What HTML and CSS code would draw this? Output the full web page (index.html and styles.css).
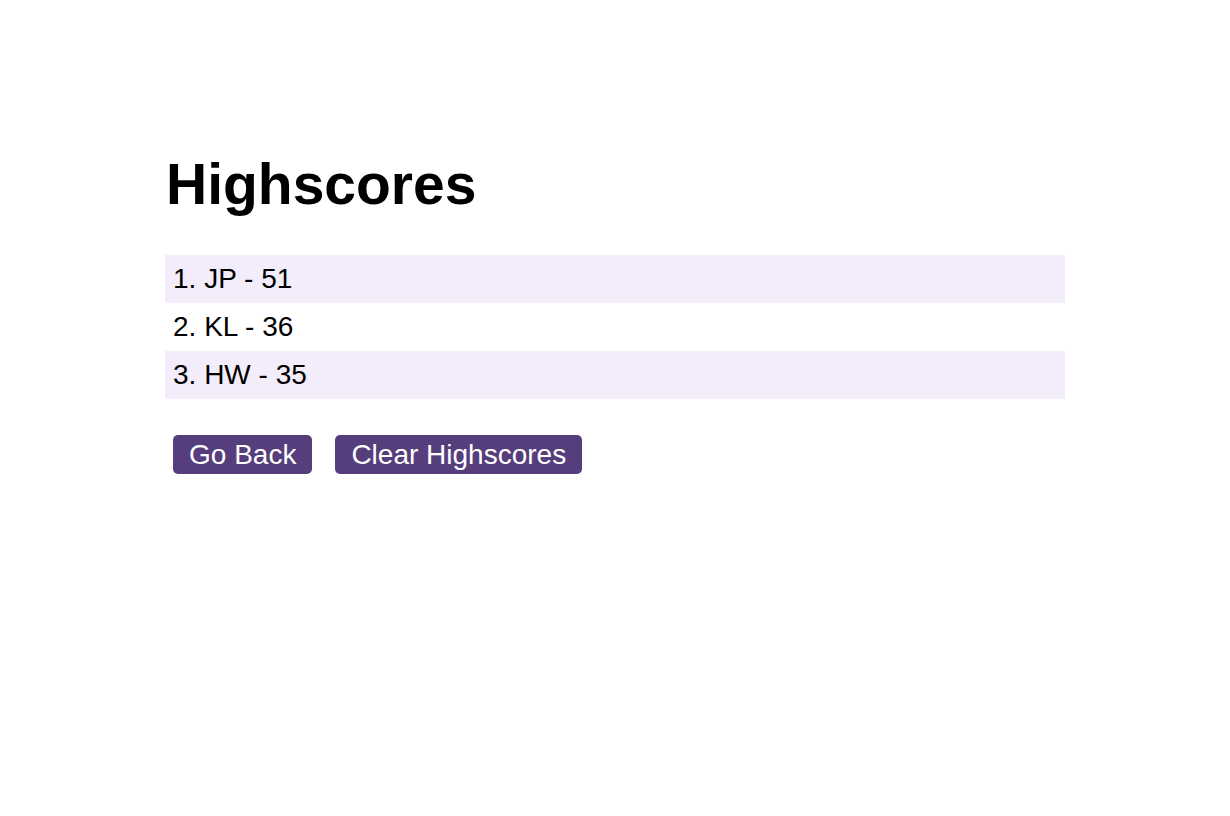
FILE: index.html
```html
<!DOCTYPE html>
<html>
<head>
<meta charset="utf-8">
<link rel="stylesheet" href="styles.css">
</head>
<body>
<main class="page">
  <h1 class="title">Highscores</h1>
  <ol class="scores">
    <li class="score">1. JP - 51</li>
    <li class="score">2. KL - 36</li>
    <li class="score">3. HW - 35</li>
  </ol>
  <div class="actions">
    <button class="btn">Go Back</button>
    <button class="btn">Clear Highscores</button>
  </div>
</main>
</body>
</html>
```
FILE: styles.css
```css
html, body {
  margin: 0;
  padding: 0;
  background: #ffffff;
}
body {
  font-family: "Liberation Sans", Arial, sans-serif;
  font-size: 28px;
  color: #000;
}
.page {
  width: 900px;
  margin: 0 auto;
  padding-top: 152px;
}
.title {
  margin: 0 0 39px 1px;
  font-size: 57px;
  font-weight: bold;
  line-height: 64px;
}
.scores {
  list-style: none;
  margin: 0;
  padding: 0;
}
.score {
  height: 48px;
  line-height: 32px;
  padding: 8px 8px;
  box-sizing: border-box;
}
.score:nth-child(odd) {
  background: #f3ecfa;
}
.actions {
  display: flex;
  gap: 23px;
  margin: 36px 0 0 8px;
}
.btn {
  font-family: "Liberation Sans", Arial, sans-serif;
  font-size: 28px;
  line-height: 33px;
  height: 39px;
  padding: 3px 16px;
  border: none;
  border-radius: 5px;
  background: #563d7c;
  color: #ffffff;
  box-sizing: border-box;
}
```
